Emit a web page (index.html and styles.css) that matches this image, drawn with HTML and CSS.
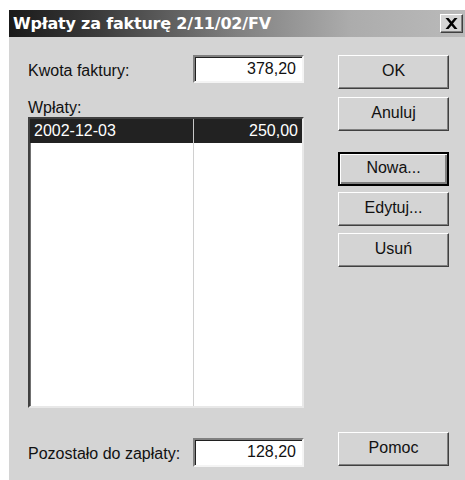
FILE: index.html
```html
<!DOCTYPE html>
<html lang="pl">
<head>
<meta charset="utf-8">
<title>Wpłaty za fakturę</title>
<link rel="stylesheet" href="styles.css">
</head>
<body>
<div class="window">
  <div class="titlebar">
    <span class="title">Wpłaty za fakturę 2/11/02/FV</span>
    <button class="close" aria-label="Zamknij">
      <svg width="13" height="11" viewBox="0 0 13 11"><path d="M0.5 0h3l3 3.6L9.5 0h3L8 5.5 12.5 11h-3L6.5 7.4 3.5 11h-3L5 5.5z" fill="#000"/></svg>
    </button>
  </div>
  <div class="content">
    <div class="left">
      <div class="field-row">
        <span class="label">Kwota faktury:</span>
        <div class="edit">378,20</div>
      </div>
      <div class="list-label">Wpłaty:</div>
      <div class="list">
        <div class="col-line"></div>
        <div class="row selected">
          <span class="c1">2002-12-03</span>
          <span class="c2">250,00</span>
        </div>
      </div>
      <div class="field-row bottom">
        <span class="label">Pozostało do zapłaty:</span>
        <div class="edit">128,20</div>
      </div>
    </div>
    <div class="right">
      <button class="btn b-ok">OK</button>
      <button class="btn b-cancel">Anuluj</button>
      <button class="btn default b-new">Nowa...</button>
      <button class="btn b-edit">Edytuj...</button>
      <button class="btn b-del">Usuń</button>
      <button class="btn b-help">Pomoc</button>
    </div>
  </div>
</div>
</body>
</html>
```

FILE: styles.css
```css
html, body {
  margin: 0;
  padding: 0;
  background: #ffffff;
}

body {
  padding: 10px 0 0 9px;
  font-family: "Liberation Sans", Arial, sans-serif;
  font-size: 16px;
  color: #111;
}

.window {
  width: 456px;
  height: 470px;
  background: #d4d4d4;
  display: flex;
  flex-direction: column;
}

.titlebar {
  height: 27px;
  background: linear-gradient(to right, #1a1a1a 0%, #3c3c3c 20%, #808080 50%, #acacac 75%, #bababa 100%);
  display: flex;
  align-items: center;
  padding: 0 2px 0 4px;
}

.title {
  flex: 1;
  color: #ffffff;
  font-family: "DejaVu Sans", Verdana, sans-serif;
  font-weight: bold;
  font-size: 16px;
  letter-spacing: -0.2px;
  white-space: nowrap;
}

.close {
  width: 23px;
  height: 19px;
  margin: 0;
  padding: 0;
  background: #d4d4d4;
  border: 1px solid;
  border-color: #ffffff #404040 #404040 #ffffff;
  box-shadow: inset -1px -1px 0 #808080;
  display: flex;
  align-items: center;
  justify-content: center;
}

.content {
  flex: 1;
  display: flex;
  padding: 18px 0 0 19px;
}

.left {
  width: 276px;
  display: flex;
  flex-direction: column;
}

.field-row {
  height: 28px;
  display: flex;
  align-items: center;
  justify-content: space-between;
}

.field-row.bottom {
  margin-top: 30px;
  height: 29px;
}

.label {
  white-space: nowrap;
  padding-top: 3px;
}

.edit {
  width: 111px;
  height: 28px;
  box-sizing: border-box;
  background: #ffffff;
  border: 2px solid;
  border-color: #808080 #f4f4f4 #f4f4f4 #808080;
  box-shadow: inset 1px 1px 0 #202020;
  text-align: right;
  padding: 1px 6px 0 0;
  line-height: 22px;
}

.bottom .edit {
  height: 29px;
}

.list-label {
  height: 34px;
  display: flex;
  align-items: flex-end;
  line-height: 18px;
}

.list {
  position: relative;
  height: 291px;
  box-sizing: border-box;
  background: #ffffff;
  border: 2px solid;
  border-color: #404040 #e8e8e8 #e8e8e8 #404040;
  box-shadow: inset 1px 1px 0 #707070;
}

.col-line {
  position: absolute;
  top: 0;
  bottom: 0;
  left: 163px;
  width: 1px;
  background: #d0d0d0;
}

.row {
  position: relative;
  height: 24px;
  display: flex;
  line-height: 24px;
}

.row.selected {
  background: #222222;
  color: #ffffff;
}

.c1 {
  width: 164px;
  box-sizing: border-box;
  padding-left: 4px;
  border-right: 1px solid #c8c8c8;
}

.c2 {
  flex: 1;
  text-align: right;
  padding-right: 4px;
}

.right {
  margin-left: 34px;
  width: 111px;
  display: flex;
  flex-direction: column;
}

.btn {
  width: 111px;
  height: 34px;
  margin: 0;
  padding: 0 0 3px;
  font-family: "Liberation Sans", Arial, sans-serif;
  font-size: 16px;
  color: #111;
  background: #d4d4d4;
  border: 1px solid;
  border-color: #ffffff #404040 #404040 #ffffff;
  box-shadow: inset -1px -1px 0 #808080;
}

.btn.default {
  border: 2px solid #000;
  box-shadow: inset 1px 1px 0 #ffffff, inset -2px -2px 0 #808080;
}

.b-cancel { margin-top: 8px; }
.b-new { margin-top: 21px; }
.b-edit { margin-top: 6px; }
.b-del { margin-top: 7px; }
.b-help { margin-top: 165px; }
```
